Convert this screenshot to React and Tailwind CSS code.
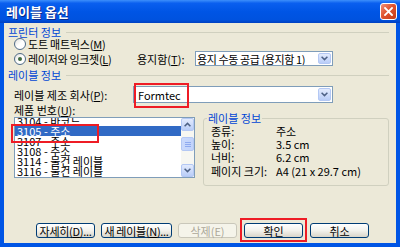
import React from "react";

function U({ children }) {
  return <span className="underline underline-offset-[1px]">{children}</span>;
}

function Radio({ checked }) {
  return (
    <svg width="12" height="12" viewBox="0 0 12 12" className="shrink-0">
      <defs>
        <linearGradient id="rgrad" x1="0" y1="0" x2="1" y2="1">
          <stop offset="0" stopColor="#dcdcd7" />
          <stop offset="0.5" stopColor="#ffffff" />
          <stop offset="1" stopColor="#ffffff" />
        </linearGradient>
      </defs>
      <circle cx="6" cy="6" r="5.5" fill="url(#rgrad)" stroke="#4f6a86" strokeWidth="1" />
      {checked && <circle cx="6" cy="6" r="2" fill="#3f6b3f" />}
    </svg>
  );
}

function DropBtn() {
  return (
    <div className="w-[13px] self-stretch m-[1px] rounded-[2px] border border-[#b4c8f4] bg-gradient-to-b from-[#e3ebfd] to-[#b9cdf8] flex items-center justify-center">
      <svg width="7" height="5" viewBox="0 0 7 5">
        <path d="M0.6 0.8 L3.5 3.6 L6.4 0.8" stroke="#4d6185" strokeWidth="1.5" fill="none" />
      </svg>
    </div>
  );
}

function ScrollBtn({ up }) {
  return (
    <div className="h-[13px] shrink-0 rounded-[2px] border border-[#b4c8f4] bg-gradient-to-b from-[#e3ebfd] to-[#b9cdf8] flex items-center justify-center">
      <svg width="7" height="5" viewBox="0 0 7 5">
        {up ? (
          <path d="M0.6 4.2 L3.5 1.4 L6.4 4.2" stroke="#4d6185" strokeWidth="1.5" fill="none" />
        ) : (
          <path d="M0.6 0.8 L3.5 3.6 L6.4 0.8" stroke="#4d6185" strokeWidth="1.5" fill="none" />
        )}
      </svg>
    </div>
  );
}

function Btn({ children, w, disabled, extra = "" }) {
  return (
    <div
      className={
        "h-[15px] shrink-0 rounded-[3px] border flex items-center justify-center leading-[12px] text-[11px] whitespace-nowrap " +
        (disabled
          ? "border-[#c9c7ba] bg-[#f5f4ea] text-[#aca899] "
          : "border-[#003c74] bg-gradient-to-b from-[#ffffff] via-[#f3f2ec] to-[#d9d5c9] text-black ") +
        w +
        " " +
        extra
      }
    >
      {children}
    </div>
  );
}

const items = [
  "3104 - 바코드",
  "3105 - 주소",
  "3107 - 주소",
  "3108 - 주소",
  "3114 - 물건 레이블",
  "3116 - 물건 레이블",
];

export default function App() {
  return (
    <div className="w-[400px] h-[247px] flex flex-col bg-[#0055e5] font-['Noto_Sans_CJK_KR',sans-serif] text-[11px] text-black overflow-hidden">
      {/* Title bar */}
      <div className="h-[23px] shrink-0 flex items-center justify-between pl-[6px] pr-[3px] bg-[linear-gradient(to_bottom,#3d8ffb_0%,#0a5fef_14%,#0055e5_50%,#0052df_85%,#0040c0_100%)]">
        <span className="text-white font-bold text-[13px] leading-none [text-shadow:1px_1px_0_#0a2a8a]">
          레이블 옵션
        </span>
        <div className="w-[17px] h-[17px] rounded-[3px] border border-white bg-[linear-gradient(135deg,#f0907a_0%,#e0542f_45%,#c63c18_100%)] flex items-center justify-center">
          <svg width="9" height="9" viewBox="0 0 9 9">
            <path d="M1 1 L8 8 M8 1 L1 8" stroke="white" strokeWidth="1.8" strokeLinecap="square" />
          </svg>
        </div>
      </div>

      {/* Client */}
      <div className="flex-1 mx-[4px] mb-[4px] bg-[#ece9d8] flex flex-col">
        {/* Header 1 */}
        <div className="mt-[3px] h-[12px] flex items-center pl-[4px] pr-[7px] gap-[5px]">
          <span className="text-[#0046d5] leading-[12px] whitespace-nowrap">프린터 정보</span>
          <div className="flex-1 border-t border-[#d0d0bf]" />
        </div>

        {/* Radio 1 */}
        <div className="h-[12px] flex items-center pl-[10px] gap-[2px]">
          <Radio />
          <span className="leading-[12px] whitespace-nowrap tracking-[-0.2px]">
            도트 매트릭스(<U>M</U>)
          </span>
        </div>

        {/* Radio 2 + tray */}
        <div className="mt-[1px] h-[15px] flex items-center pl-[10px]">
          <div className="w-[123px] flex items-center gap-[2px]">
            <Radio checked />
            <span className="leading-[12px] whitespace-nowrap tracking-[-0.3px]">
              레이저와 잉크젯(<U>L</U>)
            </span>
          </div>
          <span className="w-[58px] leading-[12px] whitespace-nowrap">
            용지함(<U>T</U>):
          </span>
          <div className="w-[138px] h-[15px] border border-[#7f9db9] bg-white flex items-center">
            <span className="flex-1 pl-[1px] leading-[12px] whitespace-nowrap overflow-hidden tracking-[-0.4px]">
              용지 수동 공급 (용지함 1)
            </span>
            <DropBtn />
          </div>
        </div>

        {/* Header 2 */}
        <div className="mt-[3px] h-[12px] flex items-center pl-[4px] pr-[7px] gap-[5px]">
          <span className="text-[#0046d5] leading-[12px] whitespace-nowrap">레이블 정보</span>
          <div className="flex-1 border-t border-[#d0d0bf]" />
        </div>

        {/* Manufacturer */}
        <div className="mt-[5px] h-[17px] flex items-center pl-[10px]">
          <span className="w-[119px] leading-[12px] whitespace-nowrap">
            레이블 제조 회사(<U>P</U>):
          </span>
          <div className="relative w-[200px] h-[17px] border border-[#7f9db9] bg-white flex items-center">
            <span className="flex-1 pl-[4px] leading-[12px] whitespace-nowrap">Formtec</span>
            <DropBtn />
            <div className="absolute left-0 -top-[4px] w-[55px] h-[25px] border-2 border-[#ee1c25]" />
          </div>
        </div>

        {/* Product number label */}
        <div className="mt-[1px] h-[12px] flex items-center pl-[10px]">
          <span className="leading-[12px] whitespace-nowrap">
            제품 번호(<U>U</U>):
          </span>
        </div>

        {/* List + info */}
        <div className="mt-[1px] flex items-start pl-[10px] gap-[8px]">
          <div className="relative w-[181px] h-[61px] border border-[#7f9db9] bg-white flex">
            <div className="flex-1 overflow-hidden">
              <div className="-mt-[2px] flex flex-col">
                {items.map((t, i) => (
                  <div
                    key={t}
                    className={
                      "h-[10px] shrink-0 flex items-center pl-[2px] leading-[10px] whitespace-nowrap " +
                      (i === 1 ? "bg-[#316ac5] text-white" : "")
                    }
                  >
                    {t}
                  </div>
                ))}
              </div>
            </div>
            <div className="w-[13px] bg-[#f7f7f2] flex flex-col">
              <ScrollBtn up />
              <div className="h-[6px] shrink-0" />
              <div className="h-[14px] shrink-0 rounded-[2px] border border-[#b4c8f4] bg-gradient-to-r from-[#cad9fc] to-[#c1d3fb] flex flex-col items-center justify-center gap-[1px]">
                <div className="w-[6px] border-t border-[#8faaf0]" />
                <div className="w-[6px] border-t border-[#8faaf0]" />
                <div className="w-[6px] border-t border-[#8faaf0]" />
              </div>
              <div className="flex-1" />
              <ScrollBtn />
            </div>
            <div className="absolute -left-[4px] top-[6px] w-[88px] h-[19px] border-2 border-[#ee1c25]" />
          </div>

          <fieldset className="-mt-[5px] w-[186px] h-[74px] border border-[#d0d0bf] rounded-[3px] pl-[3px]">
            <legend className="text-[#0046d5] leading-[12px] px-[1px]">레이블 정보</legend>
            <div className="pl-[4px] flex flex-col">
              {[
                ["종류:", "주소"],
                ["높이:", "3.5 cm"],
                ["너비:", "6.2 cm"],
                ["페이지 크기:", "A4 (21 x 29.7 cm)"],
              ].map(([a, b]) => (
                <div key={a} className="h-[13.3px] flex items-center leading-[12px] whitespace-nowrap">
                  <span className="w-[65px]">{a}</span>
                  <span>{b}</span>
                </div>
              ))}
            </div>
          </fieldset>
        </div>

        <div className="flex-1" />

        {/* Buttons */}
        <div className="mb-[5px] flex items-center pl-[32px] gap-[6px]">
          <Btn w="w-[59px]" extra="tracking-[-0.3px]">
            자세히(<U>D</U>)...
          </Btn>
          <Btn w="w-[71px]" extra="tracking-[-0.3px]">
            새 레이블(<U>N</U>)...
          </Btn>
          <Btn w="w-[59px]" disabled>
            삭제(E)
          </Btn>
          <div className="relative ml-[1px]">
            <Btn w="w-[59px]">확인</Btn>
            <div className="absolute -left-[4px] -top-[5px] w-[67px] h-[24px] border-2 border-[#ee1c25]" />
          </div>
          <Btn w="w-[59px]" extra="ml-[1px]">
            취소
          </Btn>
        </div>
      </div>
    </div>
  );
}
